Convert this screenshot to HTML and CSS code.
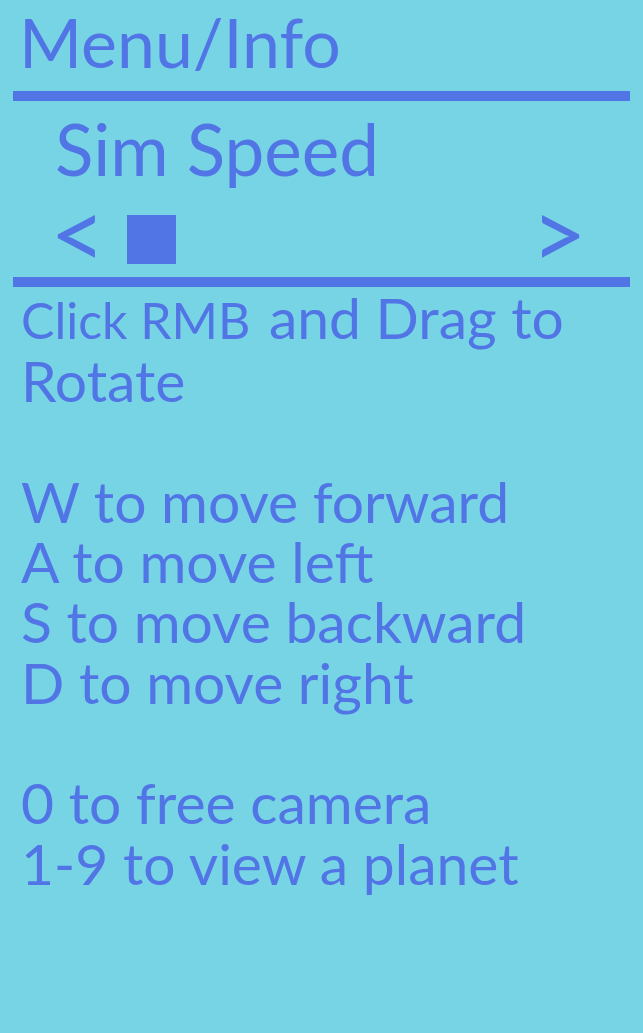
FILE: index.html
```html
<!DOCTYPE html>
<html>
<head>
<meta charset="utf-8">
<link rel="stylesheet" href="styles.css">
</head>
<body>
<div class="panel">
  <h1 class="title">Menu/Info</h1>
  <div class="rule"></div>
  <div class="speed">
    <h2 class="speed-label">Sim Speed</h2>
    <div class="slider">
      <span class="arrow arrow-left">&lt;</span>
      <span class="knob"></span>
      <span class="spacer"></span>
      <span class="arrow">&gt;</span>
    </div>
  </div>
  <div class="rule"></div>
  <div class="info">
    <p class="line"><span class="small">Click RMB</span> and Drag to</p>
    <p class="line">Rotate</p>
    <p class="line blank">&nbsp;</p>
    <p class="line">W to move forward</p>
    <p class="line">A to move left</p>
    <p class="line">S to move backward</p>
    <p class="line">D to move right</p>
    <p class="line blank">&nbsp;</p>
    <p class="line">0 to free camera</p>
    <p class="line">1-9 to view a planet</p>
  </div>
</div>
</body>
</html>
```

FILE: styles.css
```css
html, body {
  margin: 0;
  padding: 0;
  background: #76d4e5;
  height: 100%;
}
body {
  font-family: "Lato", "Open Sans", sans-serif;
  color: #5275e6;
}
.panel {
  padding: 0 13px;
  display: flex;
  flex-direction: column;
}
.title {
  margin: 0;
  box-sizing: border-box;
  height: 91px;
  padding: 2px 0 0 6px;
  font-weight: 400;
  font-size: 68px;
  line-height: 80px;
}
.rule {
  height: 10px;
  background: #5275e6;
  flex-shrink: 0;
}
.speed {
  box-sizing: border-box;
  height: 176px;
  padding: 8px 0 0 42px;
  display: flex;
  flex-direction: column;
}
.speed-label {
  margin: 0;
  font-weight: 400;
  font-size: 71px;
  line-height: 80px;
}
.slider {
  flex: 1;
  box-sizing: border-box;
  padding: 9px 43px 0 0;
  display: flex;
  align-items: center;
}
.arrow {
  font-size: 96px;
  line-height: 96px;
  margin-top: -14px;
}
.arrow-left {
  margin-left: -5px;
}
.knob {
  width: 49px;
  height: 49px;
  background: #5275e6;
  margin-left: 21px;
}
.spacer {
  flex: 1;
}
.info {
  padding: 0 0 0 8px;
}
.line {
  margin: 0;
  font-size: 57px;
  line-height: 60.3px;
  white-space: nowrap;
}
.small {
  font-size: 50px;
  margin-right: 4px;
}
```
